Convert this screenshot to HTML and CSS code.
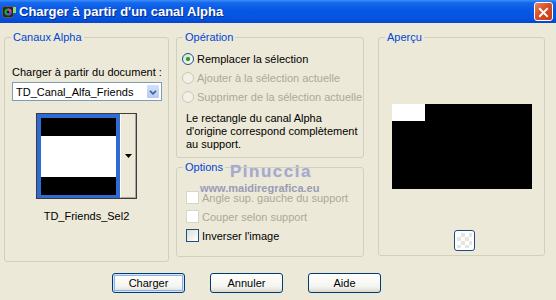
FILE: index.html
```html
<!DOCTYPE html>
<html lang="fr">
<head>
  <meta charset="UTF-8" />
  <title>Charger à partir d'un canal Alpha</title>
  <link rel="stylesheet" href="styles.css">
</head>
<body>
  <div class="window">
    <div class="titlebar">
      <svg class="app-icon" viewBox="0 0 14 14">
        <rect x="0.5" y="1.5" width="11" height="11" rx="2" fill="#262626" stroke="#5c5c5c"/>
        <circle cx="6" cy="7" r="3.6" fill="#19a04a"/>
        <path d="M6 3.4 A3.6 3.6 0 0 1 9.6 7 L6 7Z" fill="#e2418c"/>
        <path d="M6 7 L9.6 7 A3.6 3.6 0 0 1 6 10.6Z" fill="#6b4ad8"/>
        <circle cx="6" cy="7" r="1.2" fill="#111"/>
        <rect x="11" y="2" width="3" height="6" fill="#8fdc6e"/>
      </svg>
      <span class="title">Charger à partir d'un canal Alpha</span>
      <button class="close" aria-label="Fermer">
        <svg viewBox="0 0 19 19" width="19" height="19">
          <path d="M5.5 5.5 L13.5 13.5 M13.5 5.5 L5.5 13.5" stroke="#fff" stroke-width="2.2" stroke-linecap="square"/>
        </svg>
      </button>
    </div>

    <div class="content">
      <div class="groups">
        <!-- left: source channel -->
        <fieldset class="group group-canaux">
          <legend>Canaux Alpha</legend>
          <div class="field-label">Charger à partir du document :</div>
          <div class="combo">
            <span class="combo-text">TD_Canal_Alfa_Friends</span>
            <span class="combo-btn">
              <svg viewBox="0 0 14 15" width="14" height="15">
                <path d="M3.5 5.5 L7 9 L10.5 5.5" fill="none" stroke="#4d6185" stroke-width="2"/>
              </svg>
            </span>
          </div>
          <div class="thumb-picker">
            <div class="thumb">
              <div class="thumb-img">
                <div class="thumb-band"></div>
                <div class="thumb-mid"></div>
                <div class="thumb-band"></div>
              </div>
            </div>
            <div class="thumb-btn">
              <svg viewBox="0 0 7 4" width="7" height="4"><polygon points="0,0 7,0 3.5,4" fill="#000"/></svg>
            </div>
          </div>
          <div class="thumb-caption">TD_Friends_Sel2</div>
        </fieldset>

        <div class="middle">
          <fieldset class="group group-operation">
            <legend>Opération</legend>
            <div class="option-list">
              <div class="option-row"><span class="radio checked"></span>Remplacer la sélection</div>
              <div class="option-row disabled"><span class="radio"></span>Ajouter à la sélection actuelle</div>
              <div class="option-row disabled"><span class="radio"></span>Supprimer de la sélection actuelle</div>
            </div>
            <p class="note">Le rectangle du canal Alpha<br>d'origine correspond complètement<br>au support.</p>
          </fieldset>

          <fieldset class="group group-options">
            <legend>Options</legend>
            <div class="check-list">
              <div class="option-row disabled"><span class="checkbox"></span>Angle sup. gauche du support</div>
              <div class="option-row disabled"><span class="checkbox"></span>Couper selon support</div>
              <div class="option-row"><span class="checkbox"></span>Inverser l'image</div>
            </div>
          </fieldset>
        </div>

        <fieldset class="group group-apercu">
          <legend>Aperçu</legend>
          <div class="preview">
            <div class="preview-light"></div>
          </div>
          <button class="tile-btn" aria-label="Arrière-plan"><span class="tile-check"></span></button>
        </fieldset>
      </div>

      <div class="actions">
        <button class="btn btn-default">Charger</button>
        <button class="btn">Annuler</button>
        <button class="btn">Aide</button>
      </div>
    </div>

    <div class="watermark">
      <div class="wm-name">Pinuccia</div>
      <div class="wm-url">www.maidiregrafica.eu</div>
    </div>
  </div>
</body>
</html>
```

FILE: styles.css
```css
* {
  box-sizing: border-box;
}

body {
  margin: 0;
  font-family: "Liberation Sans", Arial, sans-serif;
  font-size: 11px;
  color: #000;
  background: #ece9d8;
}

.window {
  position: relative;
  width: 556px;
  height: 300px;
  background: #ece9d8;
  overflow: hidden;
}

/* title bar */
.titlebar {
  height: 23px;
  display: flex;
  align-items: center;
  padding: 0 3px 0 2px;
  background: linear-gradient(#3c8ef7 0%, #1468ec 12%, #0657e4 45%, #0554e2 75%, #0448cf 100%);
}

.app-icon {
  width: 14px;
  height: 14px;
  flex: none;
}

.title {
  flex: 1;
  margin-left: 3px;
  color: #fff;
  font-weight: bold;
  font-size: 13px;
  text-shadow: 1px 1px 0 #0a2a8a;
}

.close {
  width: 19px;
  height: 19px;
  padding: 0;
  border: 1px solid #fff;
  border-radius: 3px;
  background: linear-gradient(135deg, #e9835f 0%, #d94e27 45%, #c63b16 100%);
  display: flex;
}

/* group boxes */
.content {
  padding: 7px 0 0 4px;
}

.groups {
  display: flex;
  align-items: flex-start;
  gap: 7px;
}

.group {
  margin: 0;
  padding: 0;
  min-width: 0;
  border: 1px solid #d0d0bf;
  border-radius: 3px;
}

.group legend {
  margin-left: 6px;
  padding: 0 2px;
  line-height: 14px;
  color: #0046d5;
}

.group-canaux {
  width: 165px;
  height: 232px;
}

.field-label {
  margin: 21px 0 0 7px;
  line-height: 14px;
}

.combo {
  display: flex;
  align-items: center;
  height: 19px;
  margin: 3px 6px 0 7px;
  padding: 0 1px 0 3px;
  border: 1px solid #7f9db9;
  background: #fff;
}

.combo-text {
  flex: 1;
}

.combo-btn {
  width: 14px;
  height: 15px;
  border: 1px solid #fff;
  border-radius: 2px;
  background: linear-gradient(#d3e0fd, #b4cbf9);
  display: flex;
}

.thumb-picker {
  display: flex;
  width: 101px;
  height: 86px;
  margin: 12px auto 0;
  border: 1px solid #3c3c3c;
}

.thumb {
  padding: 4px 4px 3px 4px;
  background: #2f6bd3;
}

.thumb-img {
  width: 75px;
  height: 77px;
  display: flex;
  flex-direction: column;
}

.thumb-band {
  height: 18px;
  background: #000;
}

.thumb-mid {
  flex: 1;
  background: #fff;
}

.thumb-btn {
  flex: 1;
  display: flex;
  align-items: center;
  justify-content: center;
  border-left: 1px solid #fff;
  border-right: 1px solid #aca899;
  border-bottom: 1px solid #aca899;
  background: #ece9d8;
}

.thumb-caption {
  margin-top: 10px;
  text-align: center;
  line-height: 14px;
}

/* operation + options */
.middle {
  width: 188px;
  display: flex;
  flex-direction: column;
  gap: 2px;
}

.group-operation {
  height: 128px;
}

.option-list {
  margin: 5px 0 0 5px;
}

.option-row {
  display: flex;
  align-items: center;
  height: 19px;
}

.option-row.disabled {
  color: #aca899;
}

.radio {
  position: relative;
  flex: none;
  width: 12px;
  height: 12px;
  margin-right: 3px;
  border: 1px solid #1c5180;
  border-radius: 50%;
  background: linear-gradient(135deg, #dcdcd5, #fff);
}

.disabled .radio {
  border-color: #cac8bb;
  background: #f3f1e6;
}

.radio.checked::after {
  content: "";
  position: absolute;
  left: 3px;
  top: 3px;
  width: 4px;
  height: 4px;
  border-radius: 50%;
  background: #21a121;
  box-shadow: 0 0 1px #55c355;
}

.note {
  margin: 6px 0 0 9px;
  line-height: 13px;
}

.group-options {
  height: 97px;
}

.check-list {
  margin: 14px 0 0 9px;
}

.checkbox {
  flex: none;
  width: 13px;
  height: 13px;
  margin-right: 3px;
  border: 1px solid #1c5180;
  background: linear-gradient(135deg, #dcdcd5, #fff);
}

.disabled .checkbox {
  border-color: #d8d6cb;
  background: #fff;
}

/* preview */
.group-apercu {
  width: 167px;
  height: 226px;
  margin-left: 7px;
}

.preview {
  width: 140px;
  height: 85px;
  margin: 60px 0 0 13px;
  background: #000;
}

.preview-light {
  width: 33px;
  height: 17px;
  background: #fff;
}

.tile-btn {
  display: block;
  width: 21px;
  height: 21px;
  margin: 41px 0 0 75px;
  padding: 2px;
  border: 1px solid #1c4a8a;
  border-radius: 3px;
  background: #fff;
}

.tile-check {
  display: block;
  width: 100%;
  height: 100%;
  background: conic-gradient(#e6e6e0 25%, #fff 0 50%, #e6e6e0 0 75%, #fff 0);
  background-size: 8px 8px;
}

/* dialog buttons */
.actions {
  display: flex;
  gap: 25px;
  margin-top: 11px;
  padding-left: 108px;
}

.btn {
  width: 73px;
  height: 20px;
  padding: 0;
  font: inherit;
  color: #000;
  border: 1px solid #003c74;
  border-radius: 3px;
  background: linear-gradient(#fff 0%, #f4f4f0 70%, #dcd8cd 100%);
}

.btn-default {
  box-shadow: inset 0 0 0 1px #cee7ff, inset 0 0 0 2px #8cb0ee;
}

/* watermark over the options box */
.watermark {
  position: absolute;
  left: 200px;
  top: 163px;
  pointer-events: none;
}

.wm-name {
  margin-left: 30px;
  font-size: 17px;
  line-height: 18px;
  font-weight: bold;
  letter-spacing: 1.5px;
  color: #a8aacb;
  text-shadow: 0 0 1px #c9cadf;
}

.wm-url {
  margin-top: 2px;
  font-size: 11px;
  line-height: 10px;
  font-weight: bold;
  color: #9a9bb6;
}
```
